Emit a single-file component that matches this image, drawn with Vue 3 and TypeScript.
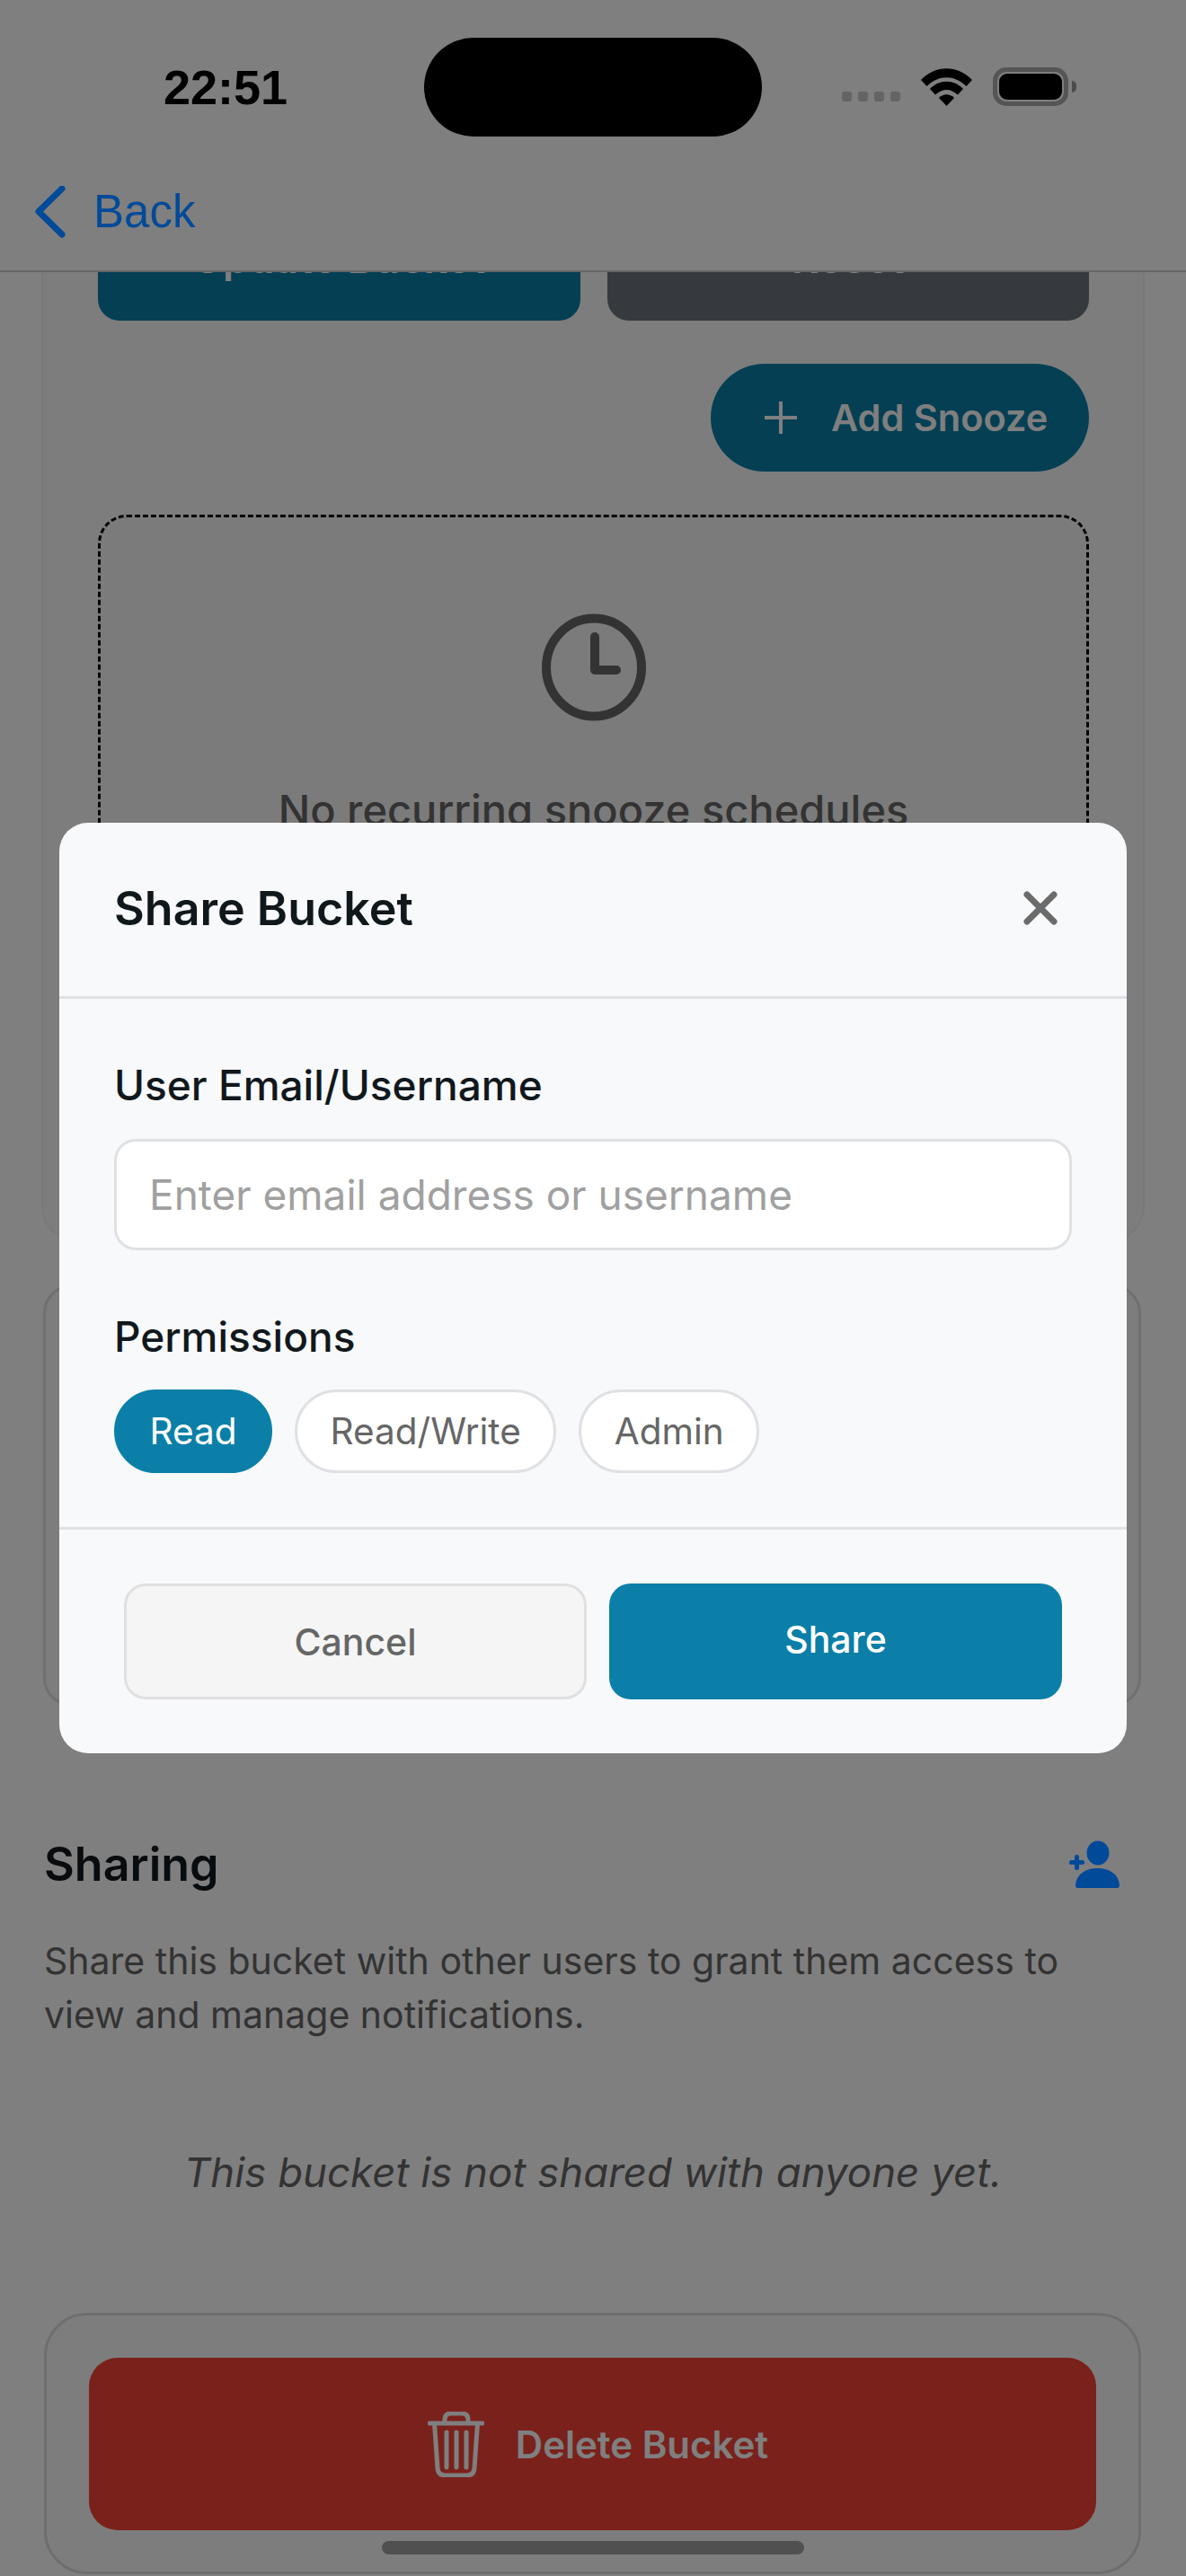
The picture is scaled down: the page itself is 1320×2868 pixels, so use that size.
<template>
  <div class="screen">
    <header class="topbar">
      <div class="status">
        <span class="time">22:51</span>
        <div class="status-icons">
          <div class="signal"><i></i><i></i><i></i><i></i></div>
          <svg class="wifi" width="57" height="42" viewBox="0 0 57 42">
            <path d="M0 13C16-4 41-4 57 13L50.500 20C37 7 20 7 6.500 20Z" />
            <path d="M10 23C20 12 37 12 47 23L41 29.500C33 22 24 22 16 29.500Z" />
            <path d="M20 33C25 28 32 28 37 33L28.500 42Z" />
          </svg>
          <div class="battery"><span></span></div>
          <div class="battery-cap"></div>
        </div>
      </div>
      <div class="island"></div>
      <nav class="nav">
        <svg class="chevron" width="36" height="58" viewBox="0 0 36 58">
          <path d="M30 3L4 28.500L30 54" />
        </svg>
        <span class="back">Back</span>
      </nav>
    </header>

    <main class="scroll">
      <section class="card snooze-card">
        <div class="form-actions">
          <button class="btn teal">Update Bucket</button>
          <button class="btn grey">Reset</button>
        </div>
        <div class="snooze-head">
          <button class="add-snooze">
            <svg width="40" height="40" viewBox="0 0 40 40"><path d="M20 2V38M2 20H38" /></svg>
            Add Snooze
          </button>
        </div>
        <div class="empty-box">
          <svg class="clock" width="116" height="120" viewBox="0 0 116 120">
            <ellipse cx="58" cy="60" rx="53" ry="54.500" />
            <path d="M59 26V63H83" />
          </svg>
          <p class="empty-title">No recurring snooze schedules</p>
        </div>
      </section>

      <section class="card spare-card"></section>

      <section class="sharing">
        <div class="sharing-head">
          <h2>Sharing</h2>
          <svg width="56" height="53" viewBox="0 0 56 53" class="add-user">
            <ellipse cx="32" cy="14" rx="12.500" ry="13.500" />
            <path d="M9.500 53Q7 53 7 49.500C8 38 18 31 31.500 31C45 31 55 38 56 49.500Q56 53 53 53Z" />
            <path class="plus" d="M2.500 24.500H14.500M8.500 18.500V30.500" />
          </svg>
        </div>
        <p class="sharing-desc">Share this bucket with other users to grant them access to view and manage notifications.</p>
        <p class="sharing-empty">This bucket is not shared with anyone yet.</p>
      </section>

      <section class="danger-card">
        <button class="delete">
          <svg width="63" height="73" viewBox="0 0 63 73">
            <path d="M2 13H61M19 13V9Q19 2 26 2H38Q45 2 45 9V13M7.500 13L11 63Q11.500 71 20 71H43Q51.500 71 52 63L55.500 13" />
            <path d="M21 23V62M32 23V62M43 23V62" />
          </svg>
          Delete Bucket
        </button>
      </section>
    </main>

    <div class="home-bar"></div>
    <div class="scrim"></div>

    <div class="modal">
      <div class="modal-head">
        <h3>Share Bucket</h3>
        <svg width="38" height="38" viewBox="0 0 38 38"><path d="M4 4L34 34M34 4L4 34" /></svg>
      </div>
      <div class="modal-body">
        <label class="label">User Email/Username</label>
        <input class="input" type="text" placeholder="Enter email address or username" />
        <label class="label perm-label">Permissions</label>
        <div class="chips">
          <button
            v-for="p in permissions"
            :key="p"
            class="chip"
            :class="{ on: p === permission }"
            @click="permission = p"
          >{{ p }}</button>
        </div>
      </div>
      <div class="modal-foot">
        <button class="cancel">Cancel</button>
        <button class="share">Share</button>
      </div>
    </div>
  </div>
</template>

<script setup lang="ts">
import { ref } from "vue";

const permissions = ["Read", "Read/Write", "Admin"];
const permission = ref("Read");
</script>

<style>
html, body { margin: 0; background: #fff; }
</style>

<style scoped>
.screen { position: relative; width: 1320px; height: 2868px; overflow: hidden; background: #fff; font-family: Inter, "Liberation Sans", sans-serif; color: #11181c; }
button { font-family: inherit; border: none; padding: 0; }

/* Top bar */
.topbar { height: 301px; background: #fff; border-bottom: 2px solid #ccc; box-sizing: content-box; }
.status { height: 193px; display: flex; align-items: center; justify-content: space-between; padding: 0 122px 0 182px; box-sizing: border-box; }
.time { font-family: "Liberation Sans", sans-serif; font-size: 54px; font-weight: 700; color: #000; line-height: 1; }
.status-icons { display: flex; align-items: center; }
.signal { display: flex; gap: 7px; margin-top: 22px; margin-right: 23px; }
.signal i { display: block; width: 11px; height: 11px; border-radius: 3px; background: #c8c8c8; }
.wifi { fill: #000; margin-right: 23px; }
.battery { width: 84px; height: 43px; box-sizing: border-box; border: 5px solid #aaa; border-radius: 15px; padding: 2px; }
.battery span { display: block; height: 100%; background: #000; border-radius: 9px; }
.battery-cap { width: 5px; height: 13px; margin-left: 4px; background: #999; border-radius: 0 5px 5px 0; }
.island { position: absolute; left: 472px; top: 42px; width: 376px; height: 110px; border-radius: 55px; background: #000; }
.nav { height: 85px; display: flex; align-items: center; padding-left: 39px; }
/* these blues sit on top of the scrim, a scrimmed colour can't get this saturated */
.chevron { position: relative; z-index: 3; fill: none; stroke: #004a99; stroke-width: 7; stroke-linecap: round; stroke-linejoin: round; }
.back { position: relative; z-index: 3; margin-left: 29px; font-family: "Liberation Sans", sans-serif; font-size: 51px; color: #004a99; }

/* Page behind the dialog */
.scroll { height: 2565px; overflow: hidden; }
.card { box-sizing: border-box; background: #fbfbfb; }
.snooze-card { margin: -100px 46px 0 46px; width: 1228px; height: 1180px; padding: 32px 60px 0 61px; border: 2px solid #f2f2f2; border-radius: 40px; }
.form-actions { display: flex; gap: 30px; }
.btn { flex: 1; height: 120px; padding-bottom: 20px; box-sizing: border-box; border-radius: 24px; color: #fff; font-size: 46px; font-weight: 600; }
.teal { background: #0b7fa8; }
.grey { background: #6c757d; }
.snooze-head { display: flex; justify-content: flex-end; margin-top: 48px; }
.add-snooze { display: flex; align-items: center; gap: 36px; height: 120px; width: 421px; padding-left: 58px; box-sizing: border-box; border-radius: 60px; background: #0b7fa8; color: #fff; font-size: 41.500px; font-weight: 600; }
.add-snooze svg { fill: none; stroke: #fff; stroke-width: 4; }
.empty-box { margin-top: 48px; height: 700px; box-sizing: border-box; border: 3px dashed #000; border-radius: 32px; background: #f7f7f7; display: flex; flex-direction: column; align-items: center; padding-top: 107px; }
.clock { fill: none; stroke: #666; stroke-width: 10; stroke-linecap: round; stroke-linejoin: round; }
.empty-title { margin: 71px 0 0; font-size: 47px; font-weight: 500; color: #666; line-height: 56px; }
.spare-card { margin: 47px 50px 0 48px; height: 470px; border: 3px solid #e0e0e0; border-radius: 32px; }

.sharing { padding: 0 49px; margin-top: 145px; }
.sharing-head { display: flex; align-items: center; justify-content: space-between; padding-right: 25px; height: 60px; }
.sharing-head h2 { margin: 0; font-size: 52px; font-weight: 600; color: #11181c; }
.add-user { position: relative; z-index: 3; fill: #004a99; }
.add-user .plus { fill: none; stroke: #004a99; stroke-width: 5; stroke-linecap: round; }
.sharing-desc { margin: 48px 0 0; font-size: 41px; line-height: 60px; color: #666; }
.sharing-empty { margin: 118px 0 0; text-align: center; font-size: 45.600px; line-height: 56px; font-style: italic; color: #666; }

.danger-card { margin: 128px 50px 0 49px; height: 291px; box-sizing: border-box; border: 3px solid #ddd; border-radius: 48px; padding: 47px; background: #fbfbfb; }
.delete { width: 100%; height: 192px; border-radius: 32px; background: #f44336; color: #fff; font-size: 42px; font-weight: 600; display: flex; align-items: center; justify-content: center; gap: 35px; padding-left: 12px; box-sizing: border-box; }
.delete svg { fill: none; stroke: #fff; stroke-width: 5; stroke-linecap: round; stroke-linejoin: round; }

.home-bar { position: absolute; left: 425px; top: 2829px; width: 470px; height: 15px; border-radius: 8px; background: #a0a0a0; }
.scrim { position: absolute; inset: 0; background: rgba(0, 0, 0, .5); z-index: 2; }

/* Dialog */
.modal { position: absolute; left: 66px; top: 916px; width: 1188px; height: 1036px; border-radius: 32px; background: #f8f9fb; z-index: 3; display: flex; flex-direction: column; }
.modal-head { height: 196px; box-sizing: border-box; border-bottom: 3px solid #dfe1e4; display: flex; align-items: center; justify-content: space-between; padding: 0 77px 3px 61px; }
.modal-head h3 { margin: 0; font-size: 52px; font-weight: 600; color: #11181c; }
.modal-head svg { fill: none; stroke: #6b6b6b; stroke-width: 7; stroke-linecap: round; }
.modal-body { height: 591px; box-sizing: border-box; border-bottom: 3px solid #dfe1e4; padding: 68px 61px 0; }
.label { display: block; font-size: 46px; line-height: 56px; font-weight: 500; color: #11181c; }
.input { display: block; width: 100%; height: 124px; margin-top: 32px; box-sizing: border-box; border: 3px solid #dfe1e4; border-radius: 24px; background: #fff; padding: 0 36px; font-family: inherit; font-size: 46px; outline: none; }
.input::placeholder { color: #a0a0a0; }
.perm-label { margin-top: 68px; }
.chips { display: flex; gap: 25px; margin-top: 31px; }
.chip { height: 93px; padding: 0 36.500px; box-sizing: border-box; border: 3px solid #dfe1e4; border-radius: 47px; background: #fff; color: #666; font-size: 40.500px; }
.chip.on { background: #0b7fa8; border-color: #0b7fa8; color: #fff; }
.modal-foot { display: flex; gap: 25px; padding: 60px 72px 0; }
.cancel { flex: 512; height: 129px; box-sizing: border-box; border: 3px solid #e0e0e0; border-radius: 24px; background: #f5f5f5; color: #666; font-size: 41px; font-weight: 500; }
.share { flex: 507; height: 129px; padding-bottom: 6px; box-sizing: border-box; border-radius: 24px; background: #0b7fa8; color: #fff; font-size: 41px; font-weight: 500; }
</style>
